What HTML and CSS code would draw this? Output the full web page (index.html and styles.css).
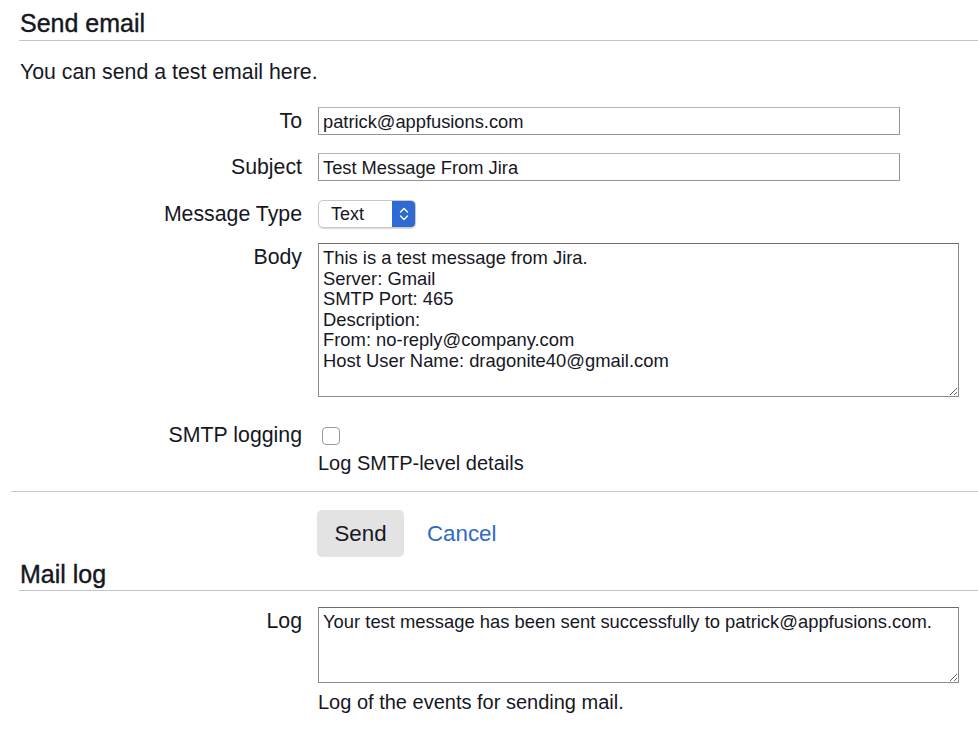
FILE: index.html
```html
<!DOCTYPE html>
<html>
<head>
<meta charset="utf-8">
<link rel="stylesheet" href="styles.css">
</head>
<body>
<div class="page">
  <h2 class="section-title">Send email</h2>
  <p class="intro">You can send a test email here.</p>

  <form class="form">
    <div class="row row-to">
      <label class="label">To</label>
      <div class="field"><input class="text-input" type="text" value="patrick@appfusions.com"></div>
    </div>
    <div class="row row-subject">
      <label class="label">Subject</label>
      <div class="field"><input class="text-input" type="text" value="Test Message From Jira"></div>
    </div>
    <div class="row row-type">
      <label class="label">Message Type</label>
      <div class="field">
        <div class="select">
          <span class="select-value">Text</span>
          <span class="select-arrow">
            <svg width="12" height="18" viewBox="0 0 12 18"><path d="M2.5 7 L6 3.5 L9.5 7" fill="none" stroke="#fff" stroke-width="1.4" stroke-linecap="round" stroke-linejoin="round"/><path d="M2.5 11 L6 14.5 L9.5 11" fill="none" stroke="#fff" stroke-width="1.4" stroke-linecap="round" stroke-linejoin="round"/></svg>
          </span>
        </div>
      </div>
    </div>
    <div class="row row-body">
      <label class="label">Body</label>
      <div class="field"><textarea class="textarea body-area">This is a test message from Jira.
Server: Gmail
SMTP Port: 465
Description:
From: no-reply@company.com
Host User Name: dragonite40@gmail.com</textarea></div>
    </div>
    <div class="row row-smtp">
      <label class="label">SMTP logging</label>
      <div class="field">
        <span class="checkbox"></span>
        <div class="desc">Log SMTP-level details</div>
      </div>
    </div>
    <div class="buttons">
      <button type="button" class="btn">Send</button>
      <a class="cancel" href="#">Cancel</a>
    </div>
  </form>

  <h2 class="section-title mail-title">Mail log</h2>
  <div class="row row-log">
    <label class="label">Log</label>
    <div class="field">
      <textarea class="textarea log-area">Your test message has been sent successfully to patrick@appfusions.com.</textarea>
      <div class="desc log-desc">Log of the events for sending mail.</div>
    </div>
  </div>
</div>
</body>
</html>
```

FILE: styles.css
```css
html, body {
  margin: 0;
  padding: 0;
  background: #fff;
}
body {
  font-family: "Liberation Sans", Arial, sans-serif;
  color: #16171f;
  font-size: 21.3px;
}
.page {
  padding-left: 19px;
}
.section-title {
  margin: 0;
  padding: 10px 0 4px 1px;
  font-size: 25px;
  font-weight: normal;
  line-height: 26px;
  border-bottom: 1px solid #c4c4c4;
  -webkit-text-stroke: 0.4px #16171f;
}
.intro {
  margin: 19px 0 0 1px;
  line-height: 24px;
}
.form {
  margin-top: 23px;
}
.row {
  display: grid;
  grid-template-columns: 283px 640px;
  column-gap: 16px;
}
.label {
  text-align: right;
  line-height: 28px;
}
.row-to { height: 46px; }
.row-subject { height: 47px; }
.row-type { height: 43px; }
.row-body { height: 180px; }
.text-input {
  box-sizing: border-box;
  width: 582px;
  height: 28px;
  margin: 0;
  border: 1px solid #9a938c;
  border-top-color: #b9b4af;
  padding: 1px 4px 0;
  font-family: "Liberation Sans", Arial, sans-serif;
  font-size: 18.3px;
  color: #16171f;
  background: #fff;
  outline: none;
}
.select {
  display: flex;
  box-sizing: border-box;
  width: 98px;
  height: 28px;
  border: 1px solid #c8c8c8;
  border-radius: 5px;
  overflow: hidden;
  box-shadow: 0 1px 1px rgba(0,0,0,0.15);
}
.select-value {
  flex: 1;
  line-height: 26px;
  padding-left: 12px;
  font-size: 18px;
  color: #16171f;
}
.select-arrow {
  width: 23px;
  background: #2f6ad3;
  display: flex;
  align-items: center;
  justify-content: center;
}
.textarea {
  display: block;
  box-sizing: border-box;
  width: 641px;
  margin: 0;
  border: 1px solid #8f8a86;
  border-top-color: #6e6a67;
  padding: 4px 4px;
  font-family: "Liberation Sans", Arial, sans-serif;
  font-size: 18.4px;
  line-height: 20.5px;
  color: #16171f;
  resize: both;
  outline: none;
}
.body-area {
  height: 154px;
}
.row-smtp .label {
  line-height: 24px;
}
.checkbox {
  display: block;
  box-sizing: border-box;
  width: 18px;
  height: 18px;
  margin: 4px 0 0 4px;
  border: 1px solid #9b9b9b;
  border-radius: 4px;
  background: #fff;
}
.desc {
  font-size: 20px;
  line-height: 24px;
  margin-top: 6px;
}
.buttons {
  border-top: 1px solid #c8cbcf;
  margin: 16px 0 0 -8px;
  padding: 18px 0 0 306px;
  display: flex;
  align-items: center;
  gap: 23px;
}
.btn {
  box-sizing: border-box;
  width: 87px;
  height: 47px;
  border: none;
  border-radius: 5px;
  background: #e3e3e3;
  font-family: "Liberation Sans", Arial, sans-serif;
  font-size: 22.3px;
  color: #16171f;
  padding: 0;
}
.cancel {
  color: #2f69c9;
  text-decoration: none;
  font-size: 22.3px;
}
.mail-title {
  margin-top: 4px;
  padding-top: 0;
  padding-bottom: 3px;
}
.row-log {
  margin-top: 16px;
}
.log-area {
  height: 76px;
}
.log-desc {
  margin-top: 7px;
}
```
